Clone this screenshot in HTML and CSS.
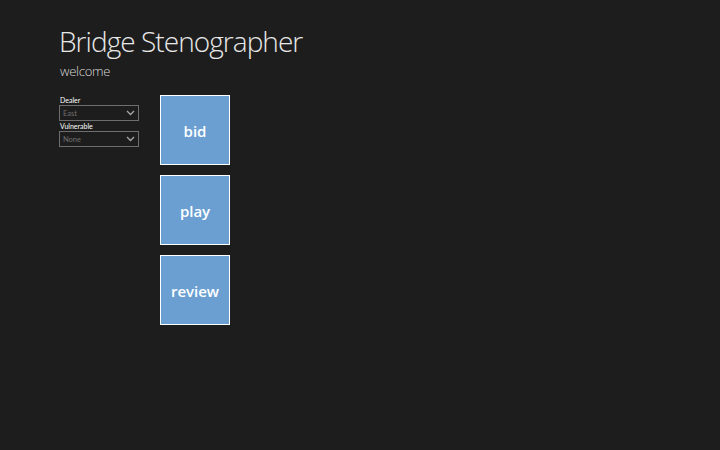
FILE: index.html
```html
<!DOCTYPE html>
<html>
<head>
<meta charset="utf-8">
<link rel="stylesheet" href="styles.css">
</head>
<body>
<div class="page">
  <header class="header">
    <h1 class="title">Bridge Stenographer</h1>
    <div class="subtitle">welcome</div>
  </header>
  <main class="content">
    <div class="settings">
      <label class="field-label">Dealer</label>
      <div class="select"><span class="select-value">East</span><svg class="chev" width="9" height="6" viewBox="0 0 9 6"><path d="M1 1 L4.5 4.5 L8 1" fill="none" stroke="#a6a6a6" stroke-width="1.3"/></svg></div>
      <label class="field-label">Vulnerable</label>
      <div class="select"><span class="select-value">None</span><svg class="chev" width="9" height="6" viewBox="0 0 9 6"><path d="M1 1 L4.5 4.5 L8 1" fill="none" stroke="#a6a6a6" stroke-width="1.3"/></svg></div>
    </div>
    <div class="tiles">
      <button class="tile">bid</button>
      <button class="tile">play</button>
      <button class="tile">review</button>
    </div>
  </main>
</div>
</body>
</html>
```
FILE: styles.css
```css
html, body {
  margin: 0;
  padding: 0;
  background: #1d1d1d;
  width: 720px;
  height: 450px;
  overflow: hidden;
}
.page {
  padding: 22px 0 0 59px;
  font-family: "Open Sans", "Noto Sans", sans-serif;
  color: #e6e6e6;
}
.title {
  margin: 0;
  font-weight: 300;
  font-size: 28px;
  line-height: 38px;
  letter-spacing: -0.95px;
  color: #e8e8e8;
}
.subtitle {
  font-weight: 300;
  font-size: 13px;
  line-height: 20px;
  letter-spacing: -0.25px;
  margin-top: 1px;
  padding-left: 1px;
  color: #d9d9d9;
}
.content {
  display: flex;
  margin-top: 14px;
  gap: 21px;
}
.settings {
  display: flex;
  flex-direction: column;
  width: 80px;
  padding-top: 1px;
}
.field-label {
  font-size: 7px;
  line-height: 9px;
  color: #ffffff;
  font-family: "Lato", sans-serif;
  padding-left: 1px;
}
.select {
  box-sizing: border-box;
  height: 16px;
  width: 80px;
  border: 1px solid #6e6e6e;
  display: flex;
  align-items: center;
  justify-content: space-between;
  padding: 0 3px 0 3px;
  margin-bottom: 1px;
}
.select-value {
  font-family: "Lato", sans-serif;
  font-size: 7.5px;
  color: #707070;
}
.chev { display: block; }
.tiles {
  display: flex;
  flex-direction: column;
  gap: 10px;
}
.tile {
  box-sizing: border-box;
  width: 70px;
  height: 70px;
  border: 1px solid #ffffff;
  background: #6b9fd1;
  color: #ffffff;
  font-family: "Open Sans", sans-serif;
  font-weight: 600;
  font-size: 15px;
  padding: 2px 0 0;
  margin: 0;
  display: flex;
  align-items: center;
  justify-content: center;
}
```
